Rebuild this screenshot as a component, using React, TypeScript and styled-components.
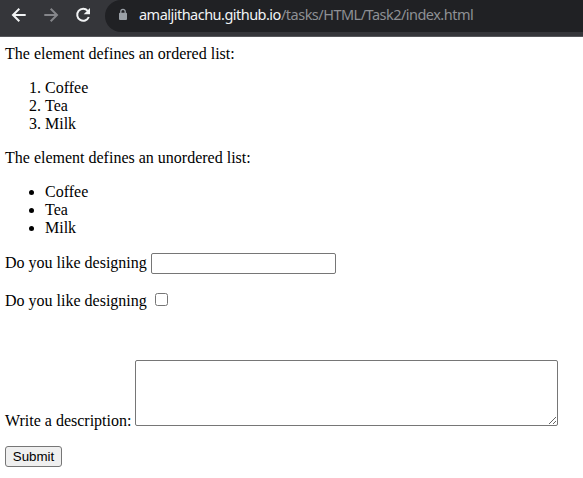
import React from 'react';
import styled, { createGlobalStyle } from 'styled-components';

const GlobalStyle = createGlobalStyle`
  html, body { margin: 0; padding: 0; background: #fff; overflow: hidden; }
  body { font: 16px/18px "Liberation Serif", serif; color: #000; }
`;

const Toolbar = styled.header`
  box-sizing: border-box;
  display: flex;
  height: 37px;
  background: #35363a;
  border-bottom: 1px solid #56575b;
`;

const NavIcons = styled.nav`
  display: flex;
  flex: none;
  width: 105px;
  height: 32px;
`;

const NavIcon = styled.svg`
  display: block;
  flex: none;
`;

const AddressBar = styled.div`
  display: flex;
  flex: 1;
  height: 32px;
  background: #202124;
  border-radius: 16px 0 0 16px;
  overflow: hidden;
`;

const Url = styled.div`
  display: flex;
  font: 14.5px/28px "Noto Sans", sans-serif;
  white-space: nowrap;
`;

const Host = styled.span`
  width: 142px;
  color: #f1f3f4;
  letter-spacing: -0.52px;
`;

const Path = styled.span`
  color: #8e9094;
  letter-spacing: -0.52px;
`;

const Page = styled.main`
  padding: 8px 5px 0;
`;

const Paragraph = styled.p`
  margin: 0 0 16px;
`;

const OrderedList = styled.ol`
  margin: 0 0 16px;
  padding-left: 40px;
`;

const BulletList = styled.ul`
  margin: 0 0 16px;
  padding-left: 40px;
`;

const Field = styled.label<{ $height: number; $gap: number; $end?: boolean }>`
  display: flex;
  align-items: ${p => (p.$end ? 'flex-end' : 'flex-start')};
  gap: 4px;
  height: ${p => p.$height}px;
  margin-bottom: ${p => p.$gap}px;
  white-space: nowrap;
`;

const FieldLabel = styled.span<{ $width: number; $above?: number; $below?: number }>`
  width: ${p => p.$width}px;
  margin-top: ${p => p.$above ?? 0}px;
  margin-bottom: ${p => p.$below ?? 0}px;
`;

const TextInput = styled.input`
  box-sizing: border-box;
  width: 185px;
  height: 21px;
  margin: 0;
  padding: 1px 2px;
  border: 1px solid #767676;
  border-radius: 2px;
`;

const Checkbox = styled.input`
  width: 13px;
  height: 13px;
  margin: 2px 0 0 4px;
`;

const Description = styled.textarea`
  box-sizing: border-box;
  width: 423px;
  height: 66px;
  margin: 0;
  padding: 2px;
  border: 1px solid #767676;
  border-radius: 2px;
`;

const SubmitButton = styled.button`
  box-sizing: border-box;
  display: block;
  width: 57px;
  height: 21px;
  padding: 0;
  border: 1px solid #767676;
  border-radius: 3px;
  background: #efefef;
  color: #000;
  font: 13.333px/19px "Liberation Sans", Arial, sans-serif;
`;

const items = ['Coffee', 'Tea', 'Milk'];

export default function App() {
  return (
    <>
      <GlobalStyle />
      <Toolbar>
        <NavIcons>
          <NavIcon width="35" height="32" fill="none" stroke="#f1f3f4" strokeWidth="2">
            <path d="M25.7 15H13M19.3 8.7 13 15l6.3 6.3" />
          </NavIcon>
          <NavIcon width="32" height="32" fill="none" stroke="#85868a" strokeWidth="2">
            <path d="M9.3 15H22M15.7 8.7 22 15l-6.3 6.3" />
          </NavIcon>
          <NavIcon width="38" height="32">
            <path d="M20.7 10.8A6 6 0 1 0 21.8 17" fill="none" stroke="#f1f3f4" strokeWidth="2" />
            <path d="M23 8v6.3h-6.3Z" fill="#f1f3f4" />
          </NavIcon>
        </NavIcons>
        <AddressBar>
          <NavIcon width="34" height="32">
            <rect x="14" y="12.7" width="8" height="7.3" rx="1" fill="#9aa0a6" />
            <path d="M15.8 13v-1.4a2.2 2.2 0 0 1 4.4 0V13" fill="none" stroke="#9aa0a6" strokeWidth="1.3" />
          </NavIcon>
          <Url><Host>amaljithachu.github.io</Host><Path>/tasks/HTML/Task2/index.html</Path></Url>
        </AddressBar>
      </Toolbar>
      <Page>
        <Paragraph>The element defines an ordered list:</Paragraph>
        <OrderedList>{items.map(item => <li key={item}>{item}</li>)}</OrderedList>
        <Paragraph>The element defines an unordered list:</Paragraph>
        <BulletList>{items.map(item => <li key={item}>{item}</li>)}</BulletList>
        <Field $height={21} $gap={17}>
          <FieldLabel $width={142} $above={1}>Do you like designing</FieldLabel>
          <TextInput type="text" />
        </Field>
        <Field $height={18} $gap={51}>
          <FieldLabel $width={142} $above={1}>Do you like designing</FieldLabel>
          <Checkbox type="checkbox" />
        </Field>
        <Field $height={66} $gap={20} $end>
          <FieldLabel $width={126} $below={-4}>Write a description:</FieldLabel>
          <Description />
        </Field>
        <SubmitButton type="button">Submit</SubmitButton>
      </Page>
    </>
  );
}
